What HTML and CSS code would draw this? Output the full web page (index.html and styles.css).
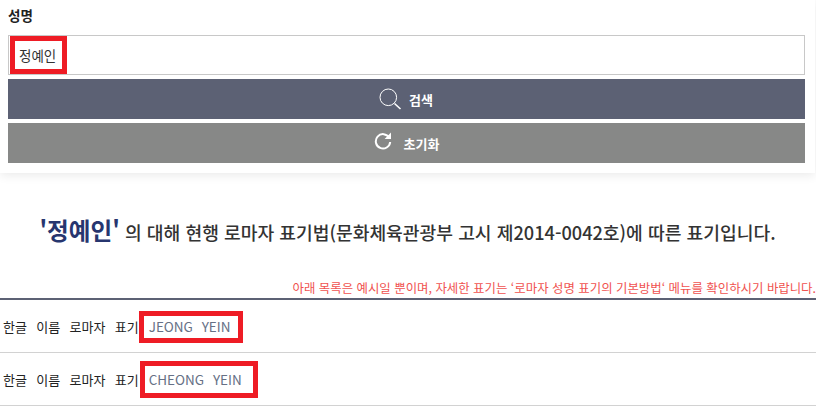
FILE: index.html
```html
<!DOCTYPE html>
<html lang="ko">
<head>
<meta charset="utf-8">
<title>로마자 표기</title>
<link rel="stylesheet" href="styles.css">
</head>
<body>
<section class="card">
  <label class="label">성명</label>
  <div class="input"><span class="mark mark-name"></span><span>정예인</span></div>
  <div class="btn btn-search">
    <svg class="ico-search" viewBox="0 0 24 24" width="24" height="24"><circle cx="9.3" cy="10.3" r="8.3" fill="none" stroke="#fff" stroke-width="1"/><path d="M15.5 16.5L21.5 22" stroke="#fff" stroke-width="1.6" fill="none"/></svg>
    <span>검색</span>
  </div>
  <div class="btn btn-reset">
    <svg class="ico-reset" viewBox="0 0 18 18" width="18" height="18"><path d="M15.2 5.6A7.2 7.2 0 1 0 16.2 10" fill="none" stroke="#fff" stroke-width="2"/><path d="M17 0.6V7H10.6Z" fill="#fff"/></svg>
    <span>초기화</span>
  </div>
</section>
<h2 class="title"><strong>'정예인'</strong> 의 대해 현행 로마자 표기법(문화체육관광부 고시 제2014-0042호)에 따른 표기입니다.</h2>
<p class="notice">아래 목록은 예시일 뿐이며, 자세한 표기는 ‘로마자 성명 표기의 기본방법‘ 메뉴를 확인하시기 바랍니다.</p>
<ul class="list">
  <li class="row"><span class="ko">한글 이름 로마자 표기</span><span class="roman mark-a">JEONG YEIN</span></li>
  <li class="row"><span class="ko">한글 이름 로마자 표기</span><span class="roman mark-b">CHEONG YEIN</span></li>
</ul>
</body>
</html>
```
FILE: styles.css
```css
* { box-sizing: border-box; }
html, body { margin: 0; padding: 0; }
body {
  width: 816px;
  height: 415px;
  overflow: hidden;
  background: #fff;
  font-family: "Noto Sans CJK KR", "Noto Sans", sans-serif;
  color: #333;
}
.card {
  width: 815px;
  height: 173px;
  padding: 0 10px 0 8px;
  background: #fff;
  box-shadow: 0 2px 10px rgba(0, 0, 0, 0.09);
  display: flex;
  flex-direction: column;
}
.label {
  height: 35px;
  padding-top: 6px;
  font-size: 13.5px;
  line-height: 18px;
  font-weight: 700;
  color: #222;
}
.input {
  position: relative;
  height: 40px;
  border: 1px solid #c8c8c8;
  padding-left: 10px;
  font-size: 13.5px;
  line-height: 38px;
  color: #333;
}
.mark {
  position: absolute;
  border: 5px solid #ee1c25;
}
.mark-name { left: 1px; top: 0; width: 57px; height: 38px; }
.btn {
  height: 40px;
  margin-top: 4px;
  display: flex;
  align-items: center;
  justify-content: center;
  color: #fff;
  font-size: 13px;
  font-weight: 700;
}
.btn-search { background: #5c6174; }
.btn-reset { background: #878887; }
.ico-search { margin-right: 6px; margin-left: -1px; }
.ico-reset { margin-right: 12px; margin-top: -5px; }
.title {
  margin: 0;
  padding: 41px 1px 0 0;
  height: 96px;
  text-align: center;
  font-size: 18.2px;
  line-height: 32px;
  font-weight: 500;
  color: #333;
  white-space: nowrap;
}
.title strong {
  font-size: 23.6px;
  font-weight: 700;
  color: #27366f;
}
.notice {
  margin: 0;
  height: 31px;
  padding-top: 9px;
  text-align: right;
  font-size: 12.42px;
  line-height: 20px;
  color: #f0524f;
  white-space: nowrap;
  border-bottom: 2px solid #5c6174;
}
.list { margin: 0; padding: 0; list-style: none; }
.row {
  height: 53px;
  padding-left: 3px;
  display: flex;
  align-items: center;
  font-size: 13px;
  border-bottom: 1px solid #d2d2d2;
  color: #222;
}
.ko { word-spacing: 5.7px; }
.roman { margin-left: 10px; font-size: 13.5px; word-spacing: 5px; color: #667085; position: relative; }
.mark-a::after, .mark-b::after {
  content: "";
  box-sizing: border-box;
  position: absolute;
  border: 5px solid #ee1c25;
}
.mark-a::after { left: -10px; top: -5px; width: 104px; height: 32px; }
.mark-b::after { left: -9px; top: -8px; width: 118px; height: 37px; }
```
